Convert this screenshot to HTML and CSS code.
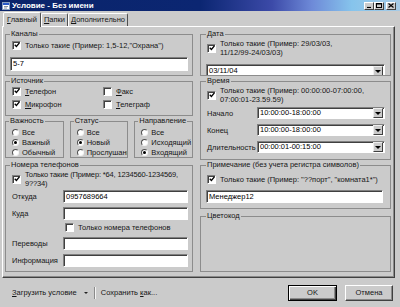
FILE: index.html
```html
<!DOCTYPE html>
<html>
<head>
<meta charset="utf-8">
<link rel="stylesheet" href="styles.css">
</head>
<body>
<div class="win">
  <div class="title">
    <svg class="ticon" width="8" height="8" viewBox="0 0 8 8"><rect x="0.5" y="0.5" width="7" height="7" fill="#fff" stroke="#8aa0c0"/><rect x="1" y="1" width="6" height="2" fill="#2a5ac8"/><path d="M2 4.5h4M2 6h3" stroke="#6a7890" stroke-width="0.8"/></svg>
    <span class="ttext">Условие - Без имени</span>
    <div class="tbtns">
      <span class="tb"><svg width="5" height="5" viewBox="0 0 5 5"><path d="M0 4.5h4" stroke="#000" stroke-width="1.2"/></svg></span>
      <span class="tb"><svg width="6" height="5" viewBox="0 0 6 5"><rect x="0.5" y="0.5" width="5" height="4" fill="none" stroke="#000"/><path d="M0 1h6" stroke="#000"/></svg></span>
      <span class="tb close"><svg width="6" height="5" viewBox="0 0 6 5"><path d="M0.5 0.5l5 4M5.5 0.5l-5 4" stroke="#000" stroke-width="1.2"/></svg></span>
    </div>
  </div>
  <div class="tabs">
    <span class="tab active"><u>Г</u>лавный</span>
    <span class="tab"><u>П</u>апки</span>
    <span class="tab"><u>Д</u>ополнительно</span>
  </div>
  <div class="panel">
    <div class="col col-l">
      <fieldset class="grp g-chan">
        <legend>Каналы</legend>
        <div class="chk-row"><span class="cb"><svg width="6" height="6" viewBox="0 0 8 8"><path d="M1 3.8l2.2 2.2 4-4.8" fill="none" stroke="#000" stroke-width="1.8"/></svg></span><span>Только такие (Пример: 1,5-12,"Охрана")</span></div>
        <div class="inp big">5-7</div>
      </fieldset>
      <fieldset class="grp g-src">
        <legend>Источник</legend>
        <div class="src">
          <div class="chk-row"><span class="cb"><svg width="6" height="6" viewBox="0 0 8 8"><path d="M1 3.8l2.2 2.2 4-4.8" fill="none" stroke="#000" stroke-width="1.8"/></svg></span><span><u>Т</u>елефон</span></div>
          <div class="chk-row"><span class="cb"></span><span><u>Ф</u>акс</span></div>
          <div class="chk-row"><span class="cb"><svg width="6" height="6" viewBox="0 0 8 8"><path d="M1 3.8l2.2 2.2 4-4.8" fill="none" stroke="#000" stroke-width="1.8"/></svg></span><span><u>М</u>икрофон</span></div>
          <div class="chk-row"><span class="cb"></span><span><u>Т</u>елеграф</span></div>
        </div>
      </fieldset>
      <div class="radios">
        <fieldset class="grp g-rad">
          <legend>Важность</legend>
          <div class="rrow"><span class="rb"></span><span>Все</span></div>
          <div class="rrow"><span class="rb on"></span><span>Важный</span></div>
          <div class="rrow"><span class="rb"></span><span>Обычный</span></div>
        </fieldset>
        <fieldset class="grp g-rad">
          <legend>Статус</legend>
          <div class="rrow"><span class="rb"></span><span>Все</span></div>
          <div class="rrow"><span class="rb on"></span><span>Новый</span></div>
          <div class="rrow"><span class="rb"></span><span>Прослушанные</span></div>
        </fieldset>
        <fieldset class="grp g-rad">
          <legend>Направление</legend>
          <div class="rrow"><span class="rb"></span><span>Все</span></div>
          <div class="rrow"><span class="rb"></span><span>Исходящий</span></div>
          <div class="rrow"><span class="rb on"></span><span>Входящий</span></div>
        </fieldset>
      </div>
      <fieldset class="grp g-phone">
        <legend>Номера телефонов</legend>
        <div class="chk-row two"><span class="cb"><svg width="6" height="6" viewBox="0 0 8 8"><path d="M1 3.8l2.2 2.2 4-4.8" fill="none" stroke="#000" stroke-width="1.8"/></svg></span><span class="tight">Только такие (Пример: *64, 1234560-1234569,<br>9??34)</span></div>
        <div class="frow r1"><span class="flbl">Откуда</span><div class="inp">0957689664</div></div>
        <div class="frow r2"><span class="flbl">Куда</span><div class="inp"></div></div>
        <div class="chk-row only"><span class="cb"></span><span>Только номера телефонов</span></div>
        <div class="frow r3"><span class="flbl">Переводы</span><div class="inp"></div></div>
        <div class="frow r4"><span class="flbl">Информация</span><div class="inp"></div></div>
      </fieldset>
    </div>
    <div class="col col-r">
      <fieldset class="grp g-date">
        <legend>Дата</legend>
        <div class="chk-row two"><span class="cb"><svg width="6" height="6" viewBox="0 0 8 8"><path d="M1 3.8l2.2 2.2 4-4.8" fill="none" stroke="#000" stroke-width="1.8"/></svg></span><span>Только такие (Пример: 29/03/03,<br>11/12/99-24/03/03)</span></div>
        <div class="inp sel big"><span class="val">03/11/04</span><span class="dd"></span></div>
      </fieldset>
      <fieldset class="grp g-time">
        <legend>Время</legend>
        <div class="chk-row two"><span class="cb"><svg width="6" height="6" viewBox="0 0 8 8"><path d="M1 3.8l2.2 2.2 4-4.8" fill="none" stroke="#000" stroke-width="1.8"/></svg></span><span>Только такие (Пример: 00:00:00-07:00:00,<br>07:00:01-23.59.59)</span></div>
        <div class="frow t1"><span class="tlbl">Начало</span><div class="inp sel"><span class="val">10:00:00-18:00:00</span><span class="dd"></span></div></div>
        <div class="frow t2"><span class="tlbl">Конец</span><div class="inp sel"><span class="val">10:00:00-18:00:00</span><span class="dd"></span></div></div>
        <div class="frow t3"><span class="tlbl">Длительность</span><div class="inp sel"><span class="val">00:00:01-00:15:00</span><span class="dd"></span></div></div>
      </fieldset>
      <fieldset class="grp g-note">
        <legend>Примечание (без учета регистра символов)</legend>
        <div class="chk-row"><span class="cb"><svg width="6" height="6" viewBox="0 0 8 8"><path d="M1 3.8l2.2 2.2 4-4.8" fill="none" stroke="#000" stroke-width="1.8"/></svg></span><span>Только такие (Пример: "??порт", "комната1*")</span></div>
        <div class="inp">Менеджер12</div>
      </fieldset>
      <fieldset class="grp g-color">
        <legend>Цветокод</legend>
      </fieldset>
    </div>
  </div>
  <div class="foot">
    <span class="lnk"><u>З</u>агрузить условие</span>
    <span class="arr"></span>
    <span class="sep"></span>
    <span class="lnk">Сохранить <u>к</u>ак...</span>
    <span class="sp"></span>
    <span class="btn ok">OK</span>
    <span class="btn">Отмена</span>
  </div>
</div>
</body>
</html>
```

FILE: styles.css
```css
* { box-sizing: border-box; }
html, body { margin: 0; padding: 0; }
body {
  width: 400px; height: 307px; overflow: hidden;
  background: #cbcbcb;
  font-family: "Liberation Sans", Arial, sans-serif;
  font-size: 7.5px; line-height: 9px; color: #161616;
}
u { text-decoration: underline; text-underline-offset: 1px; }
.win { display: flex; flex-direction: column; height: 307px; }

.title {
  flex: none; height: 11px; display: flex; align-items: center;
  padding: 0 4px 0 2px;
  background: linear-gradient(90deg, #0a246a 0%, #0b2672 50%, #3c4aa8 68%, #6e8ad8 78%, #86c4ec 88%, #a7cbe6 100%);
  color: #fff; font-weight: bold; font-size: 8px;
}
.ticon { flex: none; margin-right: 2px; }
.ttext { flex: 1; }
.tbtns { display: flex; align-items: center; }
.tb {
  width: 10px; height: 8px; background: #cbcbcb;
  border: 1px solid; border-color: #fff #404040 #404040 #fff;
  display: flex; align-items: center; justify-content: center;
}
.tb.close { margin-left: 2px; }

.tabs { flex: none; height: 15px; display: flex; align-items: flex-end; padding-left: 3px; }
.tab {
  height: 13px; padding: 0 2px; line-height: 11px;
  border: 1px solid; border-bottom: none;
  border-color: #fff #505050 transparent #fff;
  border-radius: 2px 2px 0 0;
}
.tab.active {
  height: 15px; margin-bottom: -1px; position: relative; z-index: 1;
  background: #cbcbcb; padding: 0 3px; line-height: 13px;
}

.panel {
  flex: none; height: 252px; margin: 0 5px 0 2px;
  border: 1px solid; border-color: #fff #404040 #404040 #fff;
  box-shadow: inset -1px -1px 0 #8a8a8a;
  display: flex; gap: 7px; padding: 3px 3px 0 2px;
}
.col { display: flex; flex-direction: column; }
.col-l { width: 188px; }
.col-r { width: 191px; }

.grp {
  margin: 0; padding: 0 4px 0 4px; min-width: 0;
  border: 1px solid #8c8c8c;
  overflow: hidden;
}
legend { padding: 0 1px; height: 8px; line-height: 8px; white-space: nowrap; }

.g-chan { height: 46px; }
.g-src { height: 39px; margin-top: 1px; }
.radios { display: flex; gap: 6px; height: 41px; margin-top: 1px; }
.g-rad { flex: 1; height: 41px; padding-left: 3px; }
.g-phone { height: 111px; margin-top: 3px; }

.g-date { height: 46px; padding: 0 5px 0 5px; }
.g-time { height: 83px; margin-top: 1px; padding: 0 5px 0 5px; }
.g-note { height: 48px; margin-top: 1px; padding: 0 7px 0 5px; }
.g-color { height: 60px; margin-top: 3px; padding: 0 5px; }

.chk-row { display: flex; align-items: center; gap: 4px; height: 10px; margin-top: 2px; padding-left: 2px; white-space: nowrap; }
.chk-row.two { height: auto; margin-top: 1px; }
.tight { letter-spacing: -0.15px; }
.g-date .chk-row, .g-time .chk-row, .g-note .chk-row { padding-left: 1px; }
.g-note .chk-row { margin-top: 5px; }
.cb {
  flex: none; width: 9px; height: 9px; background: #fff;
  border: 1px solid; border-color: #808080 #fff #fff #808080;
  box-shadow: inset 1px 1px 0 #404040;
  display: flex; align-items: center; justify-content: center;
}

.src { display: grid; grid-template-columns: 91px 1fr; row-gap: 3px; margin-top: 1px; }
.src .chk-row { margin-top: 0; }

.rrow { display: flex; align-items: center; gap: 3px; height: 10px; white-space: nowrap; padding-left: 3px; }
.rrow:first-of-type { margin-top: 2px; }
.rb {
  flex: none; width: 7px; height: 7px; border-radius: 50%; background: #fff;
  border: 1px solid; border-color: #505050 #f4f4f4 #f4f4f4 #505050;
  display: flex; align-items: center; justify-content: center;
}
.rb.on::after { content: ""; width: 3px; height: 3px; border-radius: 50%; background: #000; }

.inp {
  height: 13px; background: #fff; white-space: nowrap; overflow: hidden;
  border: 1px solid; border-color: #808080 #fff #fff #808080;
  box-shadow: inset 1px 1px 0 #404040;
  padding: 0 2px; line-height: 11px; color: #000;
}
.inp.big { height: 14px; margin-top: 7px; line-height: 12px; }
.g-note .inp { margin-top: 6px; }
.sel { display: flex; align-items: center; padding-right: 1px; }
.sel .val { flex: 1; }
.dd {
  flex: none; width: 10px; height: 10px; background: #cbcbcb;
  border: 1px solid; border-color: #eee #404040 #404040 #eee;
  display: flex; align-items: center; justify-content: center;
}
.dd::after { content: ""; border-top: 3px solid #000; border-left: 3px solid transparent; border-right: 3px solid transparent; }

.frow { display: flex; align-items: center; }
.frow .inp { flex: 1; }
.flbl { width: 53px; padding-left: 2px; flex: none; }
.tlbl { width: 51px; padding-left: 1px; flex: none; }
.r1 { margin-top: 2px; }
.r2 { margin-top: 4px; }
.chk-row.only { padding-left: 55px; margin-top: 2px; }
.r3 { margin-top: 5px; }
.r4 { margin-top: 4px; }
.t1 { margin-top: 3px; }
.t1 .inp, .t2 .inp, .t3 .inp { height: 12px; line-height: 10px; }
.t2, .t3 { margin-top: 5px; }

.foot { flex: 1; display: flex; align-items: center; padding: 0 7px 0 12px; }
.lnk { white-space: nowrap; }
.arr { margin-left: 7px; width: 0; height: 0; border-top: 2px solid #222; border-left: 2px solid transparent; border-right: 2px solid transparent; }
.sep { width: 2px; height: 12px; margin: 0 5px 0 6px; border-left: 1px solid #8a8a8a; border-right: 1px solid #f4f4f4; }
.sp { flex: 1; }
.btn {
  width: 48px; height: 16px; display: flex; align-items: center; justify-content: center;
  border: 1px solid; border-color: #fff #404040 #404040 #fff;
  box-shadow: inset -1px -1px 0 #8a8a8a;
}
.btn.ok { width: 49px; margin-right: 8px; border: 1px solid #000; box-shadow: inset 1px 1px 0 #fff, inset -1px -1px 0 #404040, inset -2px -2px 0 #8a8a8a; }
```
